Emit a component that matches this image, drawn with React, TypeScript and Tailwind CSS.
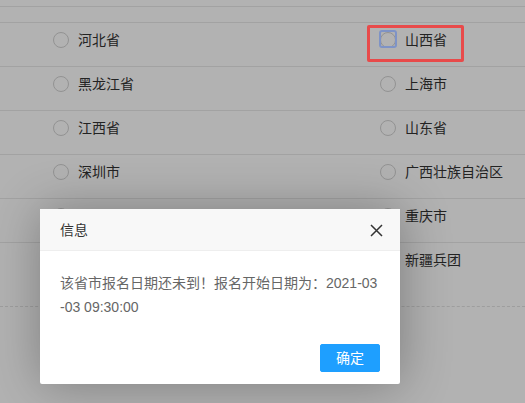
import React from 'react';

const rows: [string, string][] = [
  ['河北省', '山西省'],
  ['黑龙江省', '上海市'],
  ['江西省', '山东省'],
  ['深圳市', '广西壮族自治区'],
  ['四川省', '重庆市'],
  ['西藏自治区', '新疆兵团'],
];

function Radio({ label }: { label: string }) {
  return (
    <div className="flex items-center gap-[9px] h-[24px]">
      <span className="w-[16px] h-[16px] rounded-full border border-[#d2d2d2] bg-white" />
      <span className="text-[14px] text-[#333] leading-[24px]">{label}</span>
    </div>
  );
}

function App() {
  return (
    <div
      className="relative w-[525px] h-[403px] overflow-hidden bg-white"
      style={{ fontFamily: '"Liberation Sans", "Noto Sans CJK SC", sans-serif' }}
    >
      {/* Page behind the overlay */}
      <div className="mt-[6px] h-[17px] border-t border-b border-[#e9e9e9]" />
      {rows.map(([left, right], i) => (
        <div
          key={left}
          className={
            i === rows.length - 1
              ? 'flex h-[64px] pt-[5px] border-b border-dashed border-[#e2e2e2]'
              : 'flex h-[44px] pt-[5px] border-b border-[#e9e9e9]'
          }
        >
          <div className="w-[380px] pl-[53px]">
            <Radio label={left} />
          </div>
          <div>
            <Radio label={right} />
          </div>
        </div>
      ))}

      {/* Overlay */}
      <div className="absolute inset-0 bg-black/30" />

      {/* Highlight annotation */}
      <div className="absolute left-[367px] top-[25px] w-[97px] h-[37px] border-[3px] border-[#e84a4a] rounded-[2px]" />
      <div className="absolute left-[379px] top-[30px] w-[18px] h-[18px] rounded-[3px] border-2 border-[#7e93c6]" />

      {/* Dialog */}
      <div className="absolute left-[40px] top-[209px] w-[360px] bg-white rounded-[2px] shadow-[1px_1px_50px_rgba(0,0,0,0.3)]">
        <div className="relative h-[42px] pl-[20px] bg-[#f8f8f8] border-b border-[#eee] text-[14px] leading-[42px] text-[#333]">
          信息
          <svg
            className="absolute right-[17px] top-[15px]"
            width="13"
            height="13"
            viewBox="0 0 13 13"
            fill="none"
            stroke="#333"
            strokeWidth="1.5"
          >
            <path d="M1 1 L12 12 M12 1 L1 12" />
          </svg>
        </div>
        <div className="p-[20px] text-[14px] leading-[24px] text-[#666]">
          该省市报名日期还未到！报名开始日期为：2021-03
          <br />
          -03 09:30:00
        </div>
        <div className="flex justify-end px-[15px] pb-[12px]">
          <button className="mt-[5px] mx-[5px] h-[28px] px-[15px] border border-[#1e9fff] bg-[#1e9fff] text-white text-[14px] leading-[26px] rounded-[2px]">
            确定
          </button>
        </div>
      </div>
    </div>
  );
}

export default App;
